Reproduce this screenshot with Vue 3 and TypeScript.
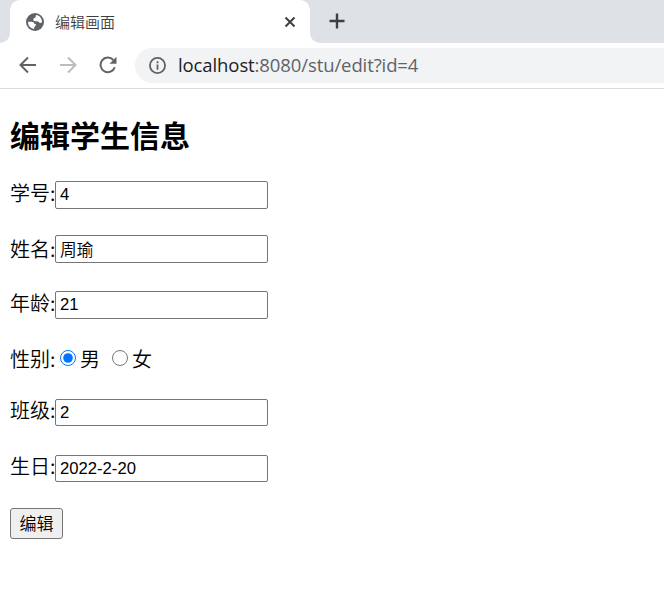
<script setup lang="ts">
import { reactive } from 'vue'

const student = reactive({ id: '4', name: '周瑜', age: '21', sex: '男', clazz: '2', birthday: '2022-2-20' })
</script>

<template>
  <div class="browser">
    <header class="tabstrip">
      <div class="strip-edge"></div>
      <div class="tab">
        <svg class="globe" viewBox="0 0 18 18">
          <circle cx="9" cy="9" r="9" fill="#5f6368" />
          <path d="M2 8.8 C4 8.6 6.4 8.4 7.5 9.3 C8.4 10 7.8 11 9 11 C10.6 11 10.4 12.3 9.3 12.7 C8.6 13 8.8 14.4 7.7 15.9 C4.3 15.3 1.8 12.4 2 8.8Z M10.5 2.1 C13.8 2.8 16 5.6 16 9 C15.4 10 14.7 10.2 13.6 9.8 C12.5 9.3 12.6 8.2 11 8.3 C9 8.4 7.1 8 7.2 6.5 C7.3 5.2 8.6 5.3 9.2 4.8 C10 4 9.2 2.8 10.5 2.1Z" fill="#fff" />
        </svg>
        <span class="tab-title">编辑画面</span>
        <svg class="close" viewBox="0 0 12 12"><path d="M1.5 1.5 10.5 10.5 M10.5 1.5 1.5 10.5" /></svg>
      </div>
      <div class="strip-rest">
        <svg class="plus" viewBox="0 0 16 16"><path d="M8 .5v15M.5 8h15" /></svg>
      </div>
    </header>
    <nav class="toolbar">
      <svg class="nav-icon" viewBox="0 0 18 18"><path d="M17 9H2M9 1.5 1.5 9 9 16.5" /></svg>
      <svg class="nav-icon disabled" viewBox="0 0 18 18"><path d="M1 9h15M9 1.5 16.5 9 9 16.5" /></svg>
      <svg class="nav-icon" viewBox="0 0 18 18">
        <path d="M15.8 11.2A7.3 7.3 0 1 1 14.3 4" />
        <path class="solid" d="M17.5.8v7h-7z" />
      </svg>
      <div class="address">
        <svg class="info" viewBox="0 0 16 16">
          <circle cx="8" cy="8" r="7.1" />
          <path d="M8 7v5M8 4v1.8" />
        </svg>
        <span class="url"><b>localhost</b>:8080/stu/edit?id=4</span>
      </div>
    </nav>
    <main class="page">
      <h2>编辑学生信息</h2>
      <form @submit.prevent>
        <div class="row id"><label>学号:</label><input v-model="student.id" type="text" /></div>
        <div class="row name"><label>姓名:</label><input v-model="student.name" type="text" /></div>
        <div class="row age"><label>年龄:</label><input v-model="student.age" type="text" /></div>
        <div class="row sex">
          <label>性别:</label>
          <input v-model="student.sex" type="radio" value="男" /><span>男</span>
          <input v-model="student.sex" class="second" type="radio" value="女" /><span>女</span>
        </div>
        <div class="row clazz"><label>班级:</label><input v-model="student.clazz" type="text" /></div>
        <div class="row birthday"><label>生日:</label><input v-model="student.birthday" type="text" /></div>
        <button type="submit">编辑</button>
      </form>
    </main>
  </div>
</template>

<style>
body {
  background: #fff;
}
</style>

<style scoped>
.browser {
  height: 596px;
  overflow: hidden;
  background: #fff;
  color: #000;
  font-family: "Noto Sans CJK SC", sans-serif;
  font-weight: 350;
}
.tabstrip {
  display: flex;
  height: 43px;
  background: #fff;
}
.strip-edge {
  width: 10px;
  background: #dee1e6;
  border-bottom-right-radius: 10px;
}
.tab {
  display: flex;
  align-items: center;
  box-sizing: border-box;
  width: 300px;
  padding: 0 14px 0 16px;
  background: linear-gradient(#dee1e6 0 12px, #fff 12px);
  position: relative;
  isolation: isolate;
}
.tab::before {
  content: "";
  position: absolute;
  inset: 0;
  z-index: -1;
  background: #fff;
  border-radius: 10px 10px 0 0;
}
.globe {
  width: 18px;
  height: 18px;
}
.tab-title {
  margin-left: 11px;
  font-size: 15px;
  line-height: 20px;
  color: #3c4043;
}
.close {
  width: 12px;
  height: 12px;
  margin-left: auto;
}
.close path,
.plus path {
  fill: none;
  stroke: #3c4043;
  stroke-width: 2;
}
.plus {
  width: 16px;
  height: 16px;
  margin-top: -1px;
}
.plus path {
  stroke-width: 2.4;
}
.strip-rest {
  display: flex;
  align-items: center;
  flex: 1;
  padding-left: 19px;
  background: #dee1e6;
  border-bottom-left-radius: 10px;
}
.toolbar {
  display: flex;
  align-items: center;
  box-sizing: border-box;
  height: 46px;
  padding: 0 0 1px 19px;
  border-bottom: 1px solid #d9dbde;
}
.nav-icon {
  flex: none;
  width: 18px;
  height: 18px;
  margin-right: 22px;
}
.nav-icon path {
  fill: none;
  stroke: #5f6368;
  stroke-width: 2;
}
.nav-icon.disabled path {
  stroke: #babcbe;
}
.nav-icon .solid {
  fill: #5f6368;
  stroke: none;
}
.address {
  display: flex;
  align-items: center;
  flex: 1;
  height: 35px;
  margin-left: -4px;
  margin-top: 1px;
  padding-left: 14px;
  background: #f1f3f4;
  border-radius: 18px 0 0 18px;
}
.info {
  width: 17px;
  height: 17px;
  fill: none;
  stroke: #5f6368;
  stroke-width: 1.7;
}
.url {
  margin: -1px 0 0 12px;
  font: 18.5px/26px "Open Sans", "Noto Sans", sans-serif;
  letter-spacing: -0.1px;
  color: #5f6368;
  white-space: nowrap;
}
.url b {
  color: #202124;
  font-weight: 400;
}
.page {
  padding: 25px 10px 0;
}
h2 {
  margin: 0;
  font-size: 30px;
  line-height: 40px;
  font-weight: 700;
}
form {
  padding-top: 27px;
}
.row {
  display: flex;
  align-items: center;
  height: 28px;
  font-size: 20px;
  line-height: 28px;
}
.row.name { margin-top: 26px; }
.row.age { margin-top: 28px; }
.row.sex { margin-top: 25px; }
.row.clazz { margin-top: 27px; }
.row.birthday { margin-top: 29px; }
.row.clazz,
.row.birthday,
.row.clazz input,
.row.birthday input {
  height: 27px;
}
label {
  flex: none;
  width: 45px;
  white-space: nowrap;
  margin-top: -5px;
}
.row.name label {
  margin-top: -1px;
}
.row.sex label,
.row.sex span {
  margin-top: 1px;
}
input[type="text"] {
  box-sizing: border-box;
  width: 213px;
  height: 28px;
  margin: 0;
  padding: 1px 4px;
  border: 1px solid #767676;
  border-radius: 2px;
  background: #fff;
  color: #000;
  font: 350 16.67px "Liberation Sans", "Noto Sans CJK SC", sans-serif;
}
input[type="radio"] {
  flex: none;
  width: 16px;
  height: 16px;
  margin: -1px 4px 0 5px;
}
input[type="radio"].second {
  margin-left: 12px;
}
button {
  display: block;
  box-sizing: border-box;
  width: 53px;
  height: 31px;
  margin: 26px 0 0;
  padding: 0 0 2px;
  border: 1px solid #767676;
  border-radius: 3px;
  background: #efefef;
  color: #000;
  font: 350 17px/27px "Noto Sans CJK SC", sans-serif;
}
</style>
